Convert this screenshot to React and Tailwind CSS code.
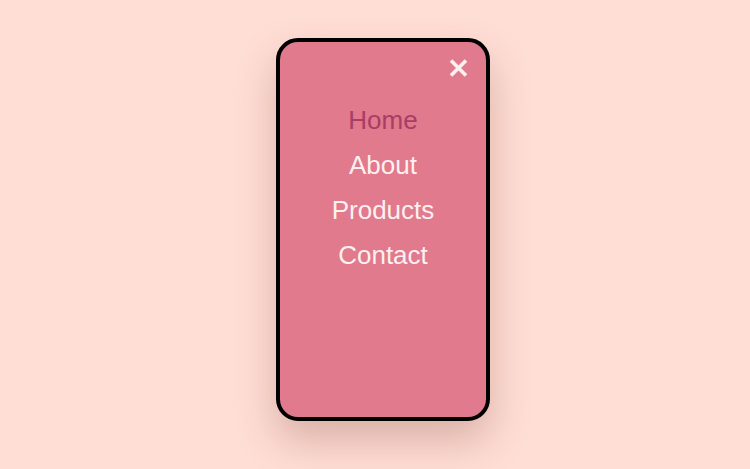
export default function App() {
  const items = ["Home", "About", "Products", "Contact"];
  return (
    <div className="w-full h-[469px] bg-[#ffded5] flex justify-center items-start pt-[38px] pl-[16px]">
      <div className="relative w-[214px] h-[383px] border-4 border-black rounded-[22px] bg-[#e07a8c] shadow-[0_20px_40px_rgba(120,60,50,0.28)]">
        <button className="absolute top-[15px] right-[17px] w-[22px] h-[22px] flex items-center justify-center">
          <svg width="19" height="18" viewBox="0 0 19 18" fill="none">
            <path d="M2 1.5 L17 16.5 M17 1.5 L2 16.5" stroke="#fdf1f1" strokeWidth="3.6" strokeLinecap="butt" />
          </svg>
        </button>
        <nav className="flex flex-col items-center pt-[56px]" style={{ fontFamily: '"Liberation Sans", Arial, sans-serif' }}>
          {items.map((t, i) => (
            <a key={t} className={`text-[26px] leading-[45px] ${i === 0 ? "text-[#a83d66]" : "text-[#fdf0f0]"}`}>
              {t}
            </a>
          ))}
        </nav>
      </div>
    </div>
  );
}
